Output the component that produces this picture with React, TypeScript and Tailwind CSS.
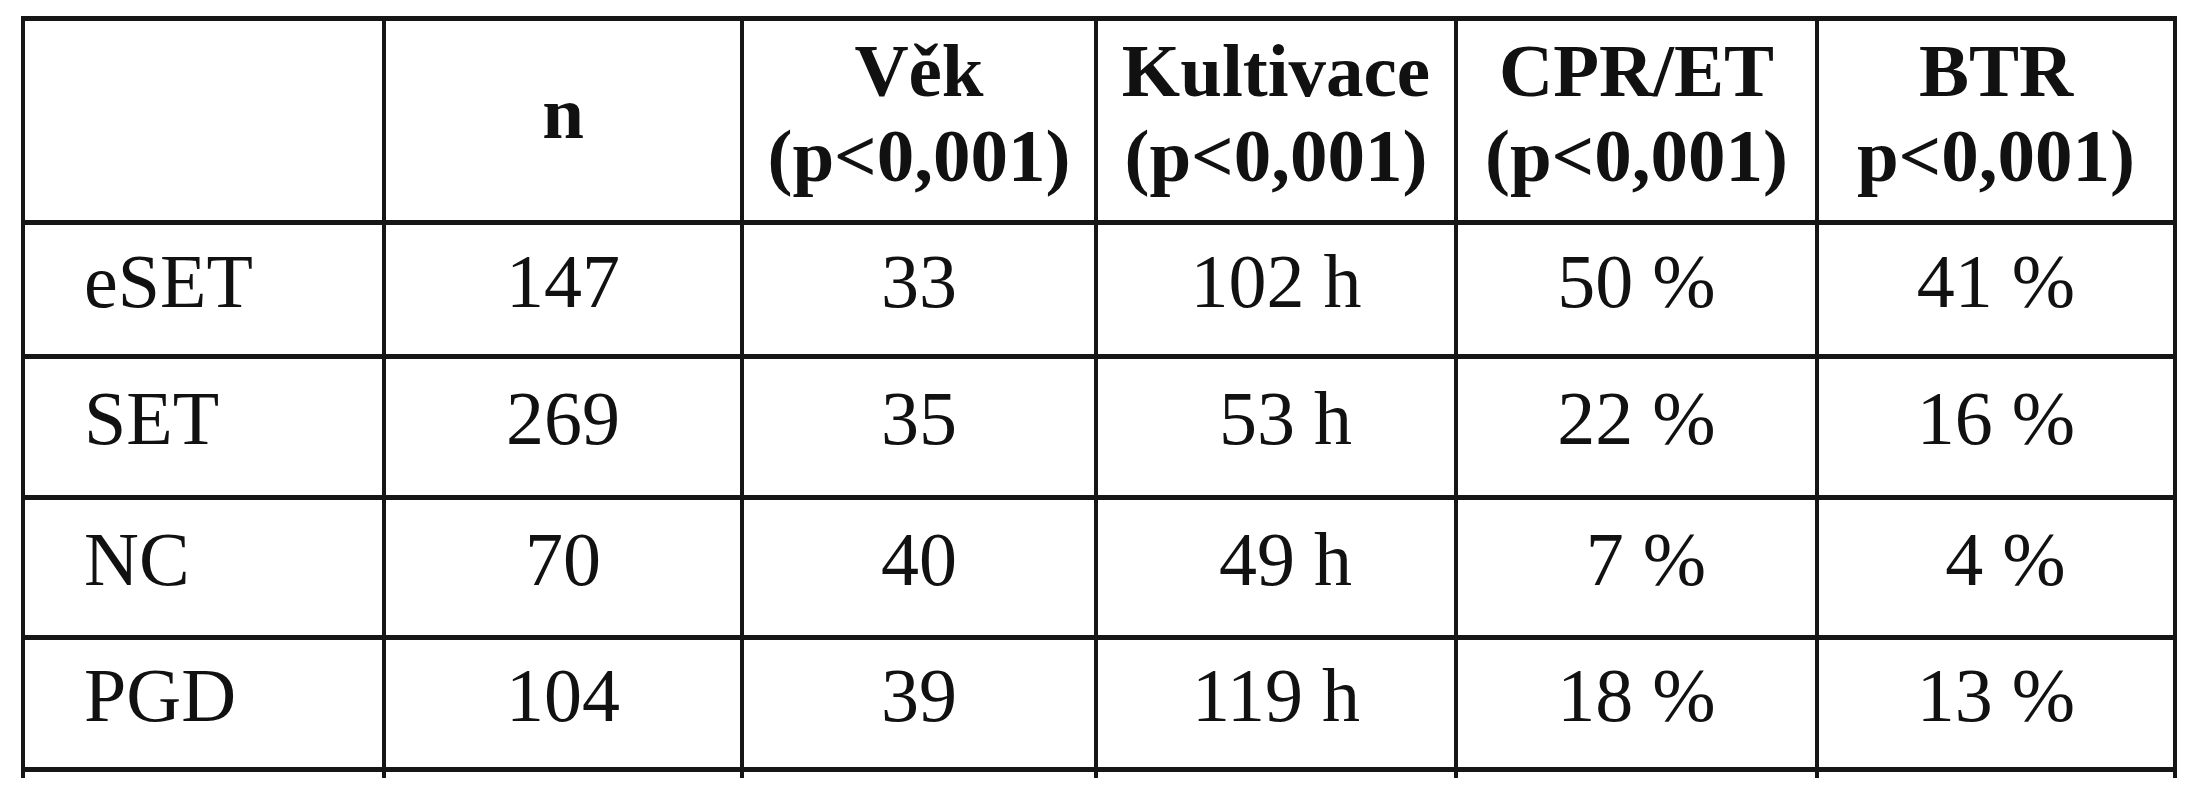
import React from "react";

const header: string[][] = [
  [],
  ["n"],
  ["Věk", "(p<0,001)"],
  ["Kultivace", "(p<0,001)"],
  ["CPR/ET", "(p<0,001)"],
  ["BTR", "p<0,001)"],
];

const rows: string[][] = [
  ["eSET", "147", "33", "102 h", "50 %", "41 %"],
  ["SET", "269", "35", " 53 h", "22 %", "16 %"],
  ["NC", "70", "40", " 49 h", " 7 %", " 4 %"],
  ["PGD", "104", "39", "119 h", "18 %", "13 %"],
];

const cellBase = "border-r-4 border-b-[5px] border-[#161616] flex items-center";

export default function App() {
  return (
    <div className="w-[2191px] h-[800px] bg-white text-[#111] pt-[16px] pl-[21px] font-['Liberation_Serif','Times_New_Roman',serif]">
      <div className="inline-grid grid-cols-[361px_358px_354px_360px_361px_358px] grid-rows-[204px_134px_141px_140px_132px_6px] border-l-4 border-t-[5px] border-[#161616]">
        {header.map((h, i) => (
          <div
            key={"h" + i}
            className={cellBase + " flex-col justify-center pb-[16px] font-bold text-[75px] leading-[85px]"}
          >
            {h.map((t, j) => (
              <div key={j}>{t}</div>
            ))}
          </div>
        ))}
        {rows.map((r, ri) =>
          r.map((c, ci) => (
            <div
              key={ri + "-" + ci}
              className={
                cellBase +
                " pb-[18px] text-[76px] leading-[90px] whitespace-pre " +
                (ci === 0 ? "justify-start pl-[59px]" : "justify-center")
              }
            >
              {c}
            </div>
          ))
        )}
        {header.map((_, i) => (
          <div key={"s" + i} className="border-r-4 border-[#161616]" />
        ))}
      </div>
    </div>
  );
}
